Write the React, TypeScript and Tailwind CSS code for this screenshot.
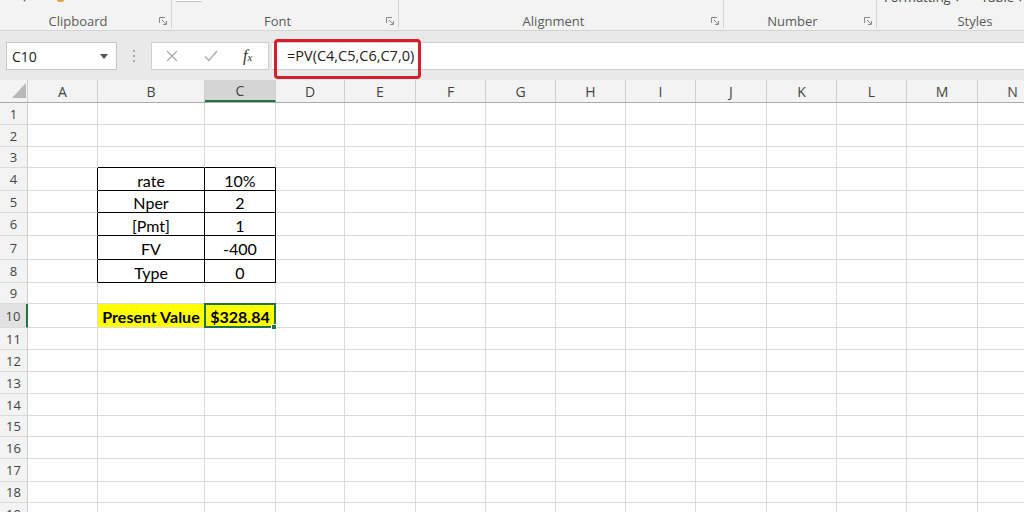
import React from 'react';

const COLS: [string, string][] = [
  ['A', 'w-[70px]'],
  ['B', 'w-[107px]'],
  ['C', 'w-[71px]'],
  ['D', 'w-[69px]'],
  ['E', 'w-[71px]'],
  ['F', 'w-[70px]'],
  ['G', 'w-[70px]'],
  ['H', 'w-[70px]'],
  ['I', 'w-[70px]'],
  ['J', 'w-[71px]'],
  ['K', 'w-[70px]'],
  ['L', 'w-[70px]'],
  ['M', 'w-[71px]'],
  ['N', 'w-[70px]'],
];

// row heights as measured on the sheet (rows 1..19)
const ROW_H = [
  'h-[22px]', 'h-[22px]', 'h-[21px]', 'h-[23px]', 'h-[22px]', 'h-[23px]', 'h-[24px]', 'h-[23px]', 'h-[21px]',
  'h-[24px]', 'h-[22px]', 'h-[22px]', 'h-[22px]', 'h-[22px]', 'h-[21px]', 'h-[22px]', 'h-[23px]', 'h-[21px]', 'h-[22px]',
];

const TABLE: Record<number, [string, string]> = {
  4: ['rate', '10%'],
  5: ['Nper', '2'],
  6: ['[Pmt]', '1'],
  7: ['FV', '-400'],
  8: ['Type', '0'],
};

function Launcher() {
  return (
    <svg width="8" height="8" viewBox="0 0 8 8" className="absolute right-[5px] bottom-[5px]">
      <path d="M0.5 6V0.5H6" fill="none" stroke="#8a8a8a" strokeWidth="1" />
      <path d="M3 3l4 4M7.5 4v3.5H4" fill="none" stroke="#8a8a8a" strokeWidth="1" />
    </svg>
  );
}

function Group({ w, label, launcher = true, children }: { w: string; label: string; launcher?: boolean; children?: React.ReactNode }) {
  return (
    <div className={`relative shrink-0 h-full flex flex-col ${w}`}>
      <div className="flex-1 relative">{children}</div>
      <div className={`h-[17px] flex items-center justify-center text-[13px] text-[#5a5a5a] leading-none ${launcher ? 'pr-[16px]' : ''}`}>
        {label}
      </div>
      {launcher && <Launcher />}
      <div className="absolute right-0 top-0 h-[28px] w-px bg-[#d4d4d4]" />
    </div>
  );
}

function Ribbon() {
  return (
    <div className="flex h-[31px] bg-[#f3f3f3] border-b border-[#d4d4d4] overflow-hidden font-['Open_Sans',sans-serif]">
      <Group w="w-[172px]" label="Clipboard">
        <div className="flex items-start -mt-[13px] text-[13px] text-[#444]">
          <span className="ml-[22px] text-[10px] mt-[4px] text-[#666]">▾</span>
          <span className="ml-[30px] mt-[6px] w-[7px] h-[9px] rounded-[2px] bg-[#e8a33c]" />
          <span className="ml-[9px] leading-[16px]">Format Painter</span>
        </div>
      </Group>
      <Group w="w-[227px]" label="Font">
        <div className="ml-[4px] w-[26px] h-[2px] border-b border-[#c4c4c4] bg-white" />
      </Group>
      <Group w="w-[325px]" label="Alignment" />
      <Group w="w-[153px]" label="Number" />
      <Group w="w-[196px]" label="Styles" launcher={false}>
        <div className="flex items-start -mt-[11px] text-[13px] text-[#444]">
          <span className="ml-[7px] leading-[16px]">Formatting ▾</span>
          <span className="ml-[20px] leading-[16px]">Table ▾</span>
        </div>
      </Group>
    </div>
  );
}

function FormulaBar() {
  return (
    <div className="flex items-start h-[49px] bg-[#e9e9e9] pt-[11px] font-['Open_Sans',sans-serif]">
      <div className="ml-[6px] w-[111px] h-[28px] shrink-0 bg-white border border-[#c6c6c6] flex items-center pl-[5px] pr-[8px] text-[14px] text-[#222]">
        <span className="flex-1">C10</span>
        <svg width="8" height="5" viewBox="0 0 8 5">
          <path d="M0 0h8L4 5z" fill="#555" />
        </svg>
      </div>
      <div className="w-[34px] h-[28px] shrink-0 flex flex-col items-center justify-center gap-[3px]">
        <span className="w-[2px] h-[2px] bg-[#a8a8a8]" />
        <span className="w-[2px] h-[2px] bg-[#a8a8a8]" />
        <span className="w-[2px] h-[2px] bg-[#a8a8a8]" />
      </div>
      <div className="w-[118px] h-[28px] shrink-0 bg-white border border-[#cfcfcf] flex items-center">
        <svg width="12" height="12" viewBox="0 0 12 12" className="ml-[14px]">
          <path d="M1 1l10 10M11 1L1 11" stroke="#a9a9a9" strokeWidth="1.2" />
        </svg>
        <svg width="14" height="12" viewBox="0 0 14 12" className="ml-[26px]">
          <path d="M1 6.5l4 4L13 1" fill="none" stroke="#a9a9a9" strokeWidth="1.3" />
        </svg>
        <span className="ml-[25px] font-['Liberation_Serif',serif] italic text-[16px] text-[#333] leading-none">
          f<span className="text-[11px]">x</span>
        </span>
      </div>
      <div className="relative flex-1 h-[28px] ml-[3px] bg-white border-y border-[#cfcfcf] flex items-center pl-[15px] text-[14.5px] text-[#222]">
        =PV(C4,C5,C6,C7,0)
        <div className="absolute left-[2px] -top-[4px] w-[147px] h-[40px] border-[3px] border-[#d4202a] rounded-[4px]" />
      </div>
    </div>
  );
}

function HeaderRow() {
  return (
    <div className="flex h-[23px] bg-[#f3f3f3] border-b border-[#ababab] text-[14px] text-[#444] font-['Open_Sans',sans-serif]">
      <div className="relative w-[28px] shrink-0 border-r border-[#cfcfcf]">
        <svg width="14" height="15" viewBox="0 0 14 15" className="absolute left-[12px] top-[3px]">
          <path d="M14 0V15H0z" fill="#b8b8b8" />
        </svg>
      </div>
      {COLS.map(([l, w]) => (
        <div
          key={l}
          className={`${w} shrink-0 flex items-center justify-center border-r border-[#cfcfcf] ${
            l === 'C' ? 'bg-[#d5d5d5] border-b-2 border-b-[#217346]' : ''
          }`}
        >
          {l}
        </div>
      ))}
    </div>
  );
}

function Cell({ row, ci, w }: { row: number; ci: number; w: string }) {
  const inTable = row >= 4 && row <= 8 && (ci === 1 || ci === 2);
  const leftOfTable = ci === 0 && row >= 4 && row <= 8;
  const aboveTable = row === 3 && (ci === 1 || ci === 2);
  const right = inTable || leftOfTable ? 'border-r-black' : 'border-r-[#dadada]';
  const bottom = inTable || aboveTable ? 'border-b-black' : 'border-b-[#dadada]';

  if (row === 10 && ci === 1) {
    return (
      <div className={`${w} shrink-0 border-r border-b ${right} ${bottom} bg-[#ffff00] flex items-center justify-center pt-[3px] font-bold text-[16px] text-black whitespace-nowrap`}>
        Present Value
      </div>
    );
  }
  if (row === 10 && ci === 2) {
    return (
      <div className={`relative z-10 ${w} shrink-0 border-r border-b ${right} ${bottom} bg-[#ffff00] flex items-center justify-center pt-[3px] font-bold text-[16px] text-black`}>
        $328.84
        <div className="absolute -left-[1px] -top-[1px] -right-[1px] -bottom-[1px] border-2 border-[#217346]">
          <div className="absolute -right-[3px] -bottom-[4px] w-[6px] h-[6px] bg-[#217346] border border-white" />
        </div>
      </div>
    );
  }
  const text = inTable ? TABLE[row][ci - 1] : '';
  return (
    <div className={`${w} shrink-0 border-r border-b ${right} ${bottom} flex items-center justify-center pt-[3px] text-[16px] text-black`}>
      {text}
    </div>
  );
}

function SheetRow({ row, h }: { row: number; h: string }) {
  const sel = row === 10;
  return (
    <div className={`flex ${h}`}>
      <div
        className={`w-[28px] shrink-0 flex items-center justify-center pt-[2px] border-b border-[#dadada] text-[13px] text-[#444] font-['Open_Sans',sans-serif] ${
          sel ? 'bg-[#e2e2e2] border-r-2 border-r-[#217346]' : 'bg-[#f3f3f3] border-r border-r-[#cfcfcf]'
        }`}
      >
        {row}
      </div>
      {COLS.map(([l, w], ci) => (
        <Cell key={l} row={row} ci={ci} w={w} />
      ))}
    </div>
  );
}

export default function App() {
  return (
    <div className="w-[1024px] h-[512px] overflow-hidden bg-white font-['Lato',sans-serif]">
      <Ribbon />
      <FormulaBar />
      <HeaderRow />
      {ROW_H.map((h, i) => (
        <SheetRow key={i} row={i + 1} h={h} />
      ))}
    </div>
  );
}
